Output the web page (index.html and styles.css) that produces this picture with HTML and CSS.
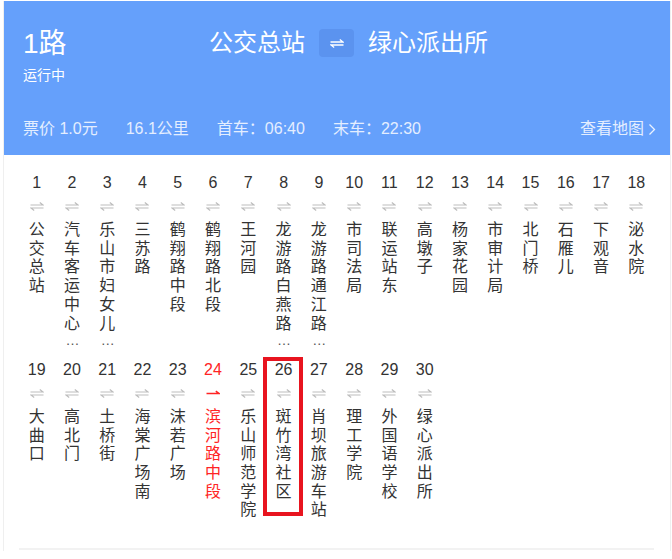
FILE: index.html
```html
<!DOCTYPE html>
<html lang="zh-CN">
<head>
<meta charset="utf-8">
<title>1路</title>
<link rel="stylesheet" href="styles.css">
</head>
<body>
<div class="card">
  <header class="hd">
    <div class="top">
      <div class="line-info">
        <div class="line-name">1路</div>
        <div class="status">运行中</div>
      </div>
      <div class="route">
        <span class="end">公交总站</span>
        <span class="swap"><svg width="14" height="9" viewBox="0 0 14 9"><path d="M0.5 3H13L9.8 0.6M13.5 6H1L4.2 8.4" fill="none" stroke="#fff" stroke-width="1.3"/></svg></span>
        <span class="end">绿心派出所</span>
      </div>
    </div>
    <div class="meta">
      <span>票价 1.0元</span>
      <span>16.1公里</span>
      <span>首车：06:40</span>
      <span>末车：22:30</span>
      <span class="map">查看地图<svg width="8" height="13" viewBox="0 0 8 13"><path d="M1.5 1.5L6.5 6.5L1.5 11.5" fill="none" stroke="#eaf2ff" stroke-width="1.3"/></svg></span>
    </div>
  </header>
  <div class="stations">
    <div class="st"><div class="no">1</div><svg class="dir" width="14" height="9" viewBox="0 0 14 9"><path d="M0.5 3H13L9.8 0.6M13.5 6H1L4.2 8.4"/></svg><div class="nm">公交总站</div></div>
    <div class="st"><div class="no">2</div><svg class="dir" width="14" height="9" viewBox="0 0 14 9"><path d="M0.5 3H13L9.8 0.6M13.5 6H1L4.2 8.4"/></svg><div class="nm">汽车客运中心</div><div class="more">…</div></div>
    <div class="st"><div class="no">3</div><svg class="dir" width="14" height="9" viewBox="0 0 14 9"><path d="M0.5 3H13L9.8 0.6M13.5 6H1L4.2 8.4"/></svg><div class="nm">乐山市妇女儿</div><div class="more">…</div></div>
    <div class="st"><div class="no">4</div><svg class="dir" width="14" height="9" viewBox="0 0 14 9"><path d="M0.5 3H13L9.8 0.6M13.5 6H1L4.2 8.4"/></svg><div class="nm">三苏路</div></div>
    <div class="st"><div class="no">5</div><svg class="dir" width="14" height="9" viewBox="0 0 14 9"><path d="M0.5 3H13L9.8 0.6M13.5 6H1L4.2 8.4"/></svg><div class="nm">鹤翔路中段</div></div>
    <div class="st"><div class="no">6</div><svg class="dir" width="14" height="9" viewBox="0 0 14 9"><path d="M0.5 3H13L9.8 0.6M13.5 6H1L4.2 8.4"/></svg><div class="nm">鹤翔路北段</div></div>
    <div class="st"><div class="no">7</div><svg class="dir" width="14" height="9" viewBox="0 0 14 9"><path d="M0.5 3H13L9.8 0.6M13.5 6H1L4.2 8.4"/></svg><div class="nm">王河园</div></div>
    <div class="st"><div class="no">8</div><svg class="dir" width="14" height="9" viewBox="0 0 14 9"><path d="M0.5 3H13L9.8 0.6M13.5 6H1L4.2 8.4"/></svg><div class="nm">龙游路白燕路</div><div class="more">…</div></div>
    <div class="st"><div class="no">9</div><svg class="dir" width="14" height="9" viewBox="0 0 14 9"><path d="M0.5 3H13L9.8 0.6M13.5 6H1L4.2 8.4"/></svg><div class="nm">龙游路通江路</div><div class="more">…</div></div>
    <div class="st"><div class="no">10</div><svg class="dir" width="14" height="9" viewBox="0 0 14 9"><path d="M0.5 3H13L9.8 0.6M13.5 6H1L4.2 8.4"/></svg><div class="nm">市司法局</div></div>
    <div class="st"><div class="no">11</div><svg class="dir" width="14" height="9" viewBox="0 0 14 9"><path d="M0.5 3H13L9.8 0.6M13.5 6H1L4.2 8.4"/></svg><div class="nm">联运站东</div></div>
    <div class="st"><div class="no">12</div><svg class="dir" width="14" height="9" viewBox="0 0 14 9"><path d="M0.5 3H13L9.8 0.6M13.5 6H1L4.2 8.4"/></svg><div class="nm">高墩子</div></div>
    <div class="st"><div class="no">13</div><svg class="dir" width="14" height="9" viewBox="0 0 14 9"><path d="M0.5 3H13L9.8 0.6M13.5 6H1L4.2 8.4"/></svg><div class="nm">杨家花园</div></div>
    <div class="st"><div class="no">14</div><svg class="dir" width="14" height="9" viewBox="0 0 14 9"><path d="M0.5 3H13L9.8 0.6M13.5 6H1L4.2 8.4"/></svg><div class="nm">市审计局</div></div>
    <div class="st"><div class="no">15</div><svg class="dir" width="14" height="9" viewBox="0 0 14 9"><path d="M0.5 3H13L9.8 0.6M13.5 6H1L4.2 8.4"/></svg><div class="nm">北门桥</div></div>
    <div class="st"><div class="no">16</div><svg class="dir" width="14" height="9" viewBox="0 0 14 9"><path d="M0.5 3H13L9.8 0.6M13.5 6H1L4.2 8.4"/></svg><div class="nm">石雁儿</div></div>
    <div class="st"><div class="no">17</div><svg class="dir" width="14" height="9" viewBox="0 0 14 9"><path d="M0.5 3H13L9.8 0.6M13.5 6H1L4.2 8.4"/></svg><div class="nm">下观音</div></div>
    <div class="st"><div class="no">18</div><svg class="dir" width="14" height="9" viewBox="0 0 14 9"><path d="M0.5 3H13L9.8 0.6M13.5 6H1L4.2 8.4"/></svg><div class="nm">泌水院</div></div>
    <div class="st"><div class="no">19</div><svg class="dir" width="14" height="9" viewBox="0 0 14 9"><path d="M0.5 3H13L9.8 0.6M13.5 6H1L4.2 8.4"/></svg><div class="nm">大曲口</div></div>
    <div class="st"><div class="no">20</div><svg class="dir" width="14" height="9" viewBox="0 0 14 9"><path d="M0.5 3H13L9.8 0.6M13.5 6H1L4.2 8.4"/></svg><div class="nm">高北门</div></div>
    <div class="st"><div class="no">21</div><svg class="dir" width="14" height="9" viewBox="0 0 14 9"><path d="M0.5 3H13L9.8 0.6M13.5 6H1L4.2 8.4"/></svg><div class="nm">土桥街</div></div>
    <div class="st"><div class="no">22</div><svg class="dir" width="14" height="9" viewBox="0 0 14 9"><path d="M0.5 3H13L9.8 0.6M13.5 6H1L4.2 8.4"/></svg><div class="nm">海棠广场南</div></div>
    <div class="st"><div class="no">23</div><svg class="dir" width="14" height="9" viewBox="0 0 14 9"><path d="M0.5 3H13L9.8 0.6M13.5 6H1L4.2 8.4"/></svg><div class="nm">沫若广场</div></div>
    <div class="st cur"><div class="no">24</div><svg class="dir" width="14" height="9" viewBox="0 0 14 9"><path d="M0.5 4.5H13L9.8 2.1"/></svg><div class="nm">滨河路中段</div></div>
    <div class="st"><div class="no">25</div><svg class="dir" width="14" height="9" viewBox="0 0 14 9"><path d="M0.5 3H13L9.8 0.6M13.5 6H1L4.2 8.4"/></svg><div class="nm">乐山师范学院</div></div>
    <div class="st mark"><div class="no">26</div><svg class="dir" width="14" height="9" viewBox="0 0 14 9"><path d="M0.5 3H13L9.8 0.6M13.5 6H1L4.2 8.4"/></svg><div class="nm">斑竹湾社区</div></div>
    <div class="st"><div class="no">27</div><svg class="dir" width="14" height="9" viewBox="0 0 14 9"><path d="M0.5 3H13L9.8 0.6M13.5 6H1L4.2 8.4"/></svg><div class="nm">肖坝旅游车站</div></div>
    <div class="st"><div class="no">28</div><svg class="dir" width="14" height="9" viewBox="0 0 14 9"><path d="M0.5 3H13L9.8 0.6M13.5 6H1L4.2 8.4"/></svg><div class="nm">理工学院</div></div>
    <div class="st"><div class="no">29</div><svg class="dir" width="14" height="9" viewBox="0 0 14 9"><path d="M0.5 3H13L9.8 0.6M13.5 6H1L4.2 8.4"/></svg><div class="nm">外国语学校</div></div>
    <div class="st"><div class="no">30</div><svg class="dir" width="14" height="9" viewBox="0 0 14 9"><path d="M0.5 3H13L9.8 0.6M13.5 6H1L4.2 8.4"/></svg><div class="nm">绿心派出所</div></div>
  </div>
</div>
</body>
</html>
```

FILE: styles.css
```css
* { box-sizing: border-box; }
html, body { margin: 0; padding: 0; background: #fff; }
body {
  font-family: "Liberation Sans", "Noto Sans CJK SC", Arial, sans-serif;
  color: #333;
}
.card {
  margin: 1px 0 0 3px;
  width: 668px;
  border-left: 1px solid #efefef;
  border-right: 1px solid #efefef;
  padding-bottom: 1px;
}
.hd {
  background: #65a0fb;
  color: #fff;
  padding: 27px 14px 15px 19px;
}
.top { display: flex; align-items: flex-start; }
.line-info { width: 186px; }
.line-name { font-size: 28px; line-height: 32px; }
.status { font-size: 14px; line-height: 20px; margin-top: 5px; }
.route {
  display: flex;
  align-items: center;
  gap: 14px;
  margin-top: 1px;
}
.end { font-size: 24px; line-height: 28px; }
.swap {
  width: 35px;
  height: 28px;
  border-radius: 4px;
  background: #5b93ef;
  display: flex;
  align-items: center;
  justify-content: center;
}
.meta {
  display: flex;
  align-items: center;
  gap: 28px;
  margin-top: 33px;
  font-size: 16px;
  line-height: 22px;
  color: #e4eeff;
}
.map {
  margin-left: auto;
  display: flex;
  align-items: center;
  gap: 4px;
}
.stations {
  display: grid;
  grid-template-columns: repeat(18, 1fr);
  row-gap: 10px;
  padding: 18px 0 30px 0;
  border-bottom: 2px solid #f2f2f2;
  margin: 0 16px 0 15px;
}
.st {
  position: relative;
  display: flex;
  flex-direction: column;
  align-items: center;
}
.no { font-size: 16px; line-height: 20px; color: #333; }
.dir { margin: 9px 0 8px; display: block; }
.dir path { fill: none; stroke: #bdbdbd; stroke-width: 1.2; }
.nm {
  width: 16px;
  font-size: 16px;
  line-height: 18.7px;
  word-break: break-all;
  text-align: center;
  color: #333;
  font-family: "Noto Sans CJK SC", sans-serif;
}
.more {
  font-size: 14px;
  line-height: 18.7px;
  color: #555;
  letter-spacing: -1px;
}
.cur .no, .cur .nm { color: #ff2424; }
.cur .dir path { stroke: #ff2424; stroke-width: 1.5; }
.mark::after {
  content: "";
  position: absolute;
  left: -3px;
  right: -2px;
  top: -3px;
  height: 151px;
  border: 4px solid #e8141f;
}
```
